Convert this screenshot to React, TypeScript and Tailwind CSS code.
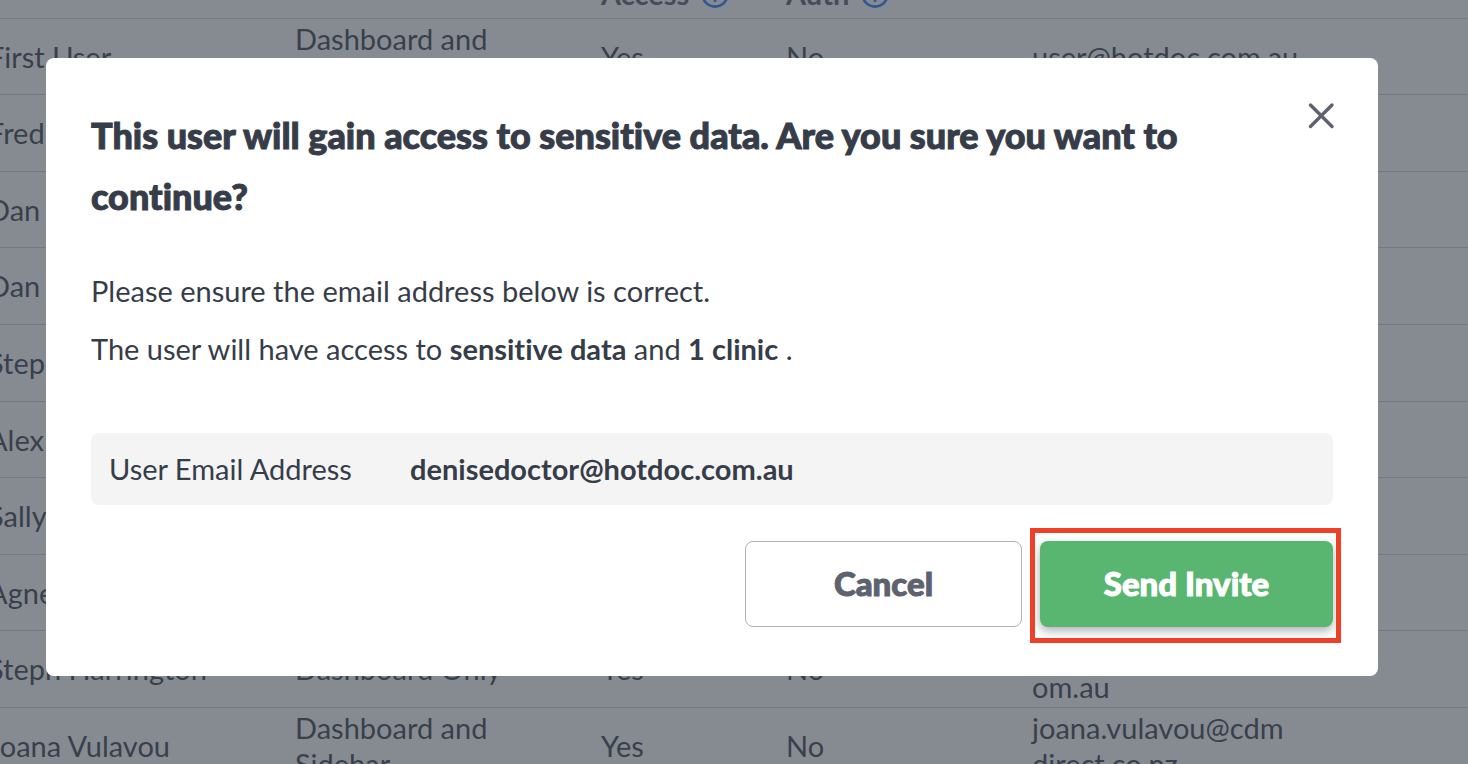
import React from "react";

type User = {
  name: string;
  permissions: string[];
  access: string;
  auth: string;
  email: string[];
};

const both = ["Dashboard and", "Sidebar"];
const only = ["Dashboard Only"];

const users: User[] = [
  { name: "First User", permissions: both, access: "Yes", auth: "No", email: ["user@hotdoc.com.au"] },
  { name: "Fred", permissions: [], access: "", auth: "", email: [] },
  { name: "Dan", permissions: [], access: "", auth: "", email: [] },
  { name: "Dan", permissions: [], access: "", auth: "", email: [] },
  { name: "Step", permissions: [], access: "", auth: "", email: [] },
  { name: "Alex", permissions: [], access: "", auth: "", email: [] },
  { name: "Sally", permissions: [], access: "", auth: "", email: [] },
  { name: "Agne", permissions: [], access: "", auth: "", email: [] },
  { name: "Steph Harrington", permissions: only, access: "Yes", auth: "No", email: ["\u00a0", "om.au"] },
  { name: "Joana Vulavou", permissions: both, access: "Yes", auth: "No", email: ["joana.vulavou@cdm", "direct.co.nz"] },
];

function InfoIcon() {
  return (
    <svg className="size-7 text-[#2678ff]" viewBox="0 0 28 28" fill="none" stroke="currentColor" strokeWidth="2.6" aria-hidden="true">
      <circle cx="14" cy="14" r="12.6" />
      <path d="M14 12.5V22M14 7v2.6" />
    </svg>
  );
}

function Lines({ lines }: { lines: string[] }) {
  return (
    <>
      {lines.map((line) => (
        <span key={line} className="block">
          {line}
        </span>
      ))}
    </>
  );
}

function UsersTable() {
  return (
    <table className="-mt-[58px] -ml-3 w-[calc(100%+12px)] table-fixed border-separate border-spacing-0 text-left text-[29px] leading-9 text-[#40444f]">
      <colgroup>
        <col className="w-[307px]" />
        <col className="w-[306px]" />
        <col className="w-[185px]" />
        <col className="w-[246px]" />
        <col />
      </colgroup>
      <thead>
        <tr className="h-[77px] text-[#5c6371]">
          <td className="border-b border-[#cfd0d4] p-0" />
          <td className="border-b border-[#cfd0d4] p-0" />
          {["Access", "Auth"].map((label) => (
            <th key={label} scope="col" className="border-b border-[#cfd0d4] p-0 pb-1.5 align-bottom">
              <span className="flex items-center gap-3">
                {label}
                <InfoIcon />
              </span>
            </th>
          ))}
          <td className="border-b border-[#cfd0d4] p-0" />
        </tr>
      </thead>
      <tbody>
        {users.map((user, i) => (
          <tr key={i} className="h-[77px] odd:h-[76px] nth-[5]:h-[77px] nth-[6]:h-[76px] nth-[7]:h-[77px] nth-[8]:h-[76px] nth-[9]:h-[77px] [&>td]:border-b [&>td]:border-[#cfd0d4] [&>td]:p-0 [&>td]:whitespace-nowrap">
            <td>{user.name}</td>
            <td><Lines lines={user.permissions} /></td>
            <td>{user.access}</td>
            <td>{user.auth}</td>
            <td><Lines lines={user.email} /></td>
          </tr>
        ))}
      </tbody>
    </table>
  );
}

function ConfirmDialog() {
  return (
    <section
      role="dialog"
      aria-modal="true"
      aria-labelledby="dialog-title"
      className="mt-[58px] mr-[90px] ml-[46px] flex-1 self-start rounded-lg bg-white px-[45px] pt-[47px] pb-[49px] text-[#363d49]"
    >
      <header className="flex items-start justify-between">
        <h1 id="dialog-title" className="max-w-[1140px] text-[36px] leading-[61px] font-black [-webkit-text-stroke:1px_currentColor]">
          This user will gain access to sensitive data. Are you sure you want to continue?
        </h1>
        <button type="button" aria-label="Close" className="-mt-px shrink-0">
          <svg className="size-6 overflow-visible" viewBox="0 0 24 24" fill="none" stroke="#5d626e" strokeWidth="3.4" strokeLinecap="round">
            <path d="M1.5 1l21.5 21.5M23 1l-21.5 21.5" />
          </svg>
        </button>
      </header>

      <div className="mt-[35px] text-[29px] leading-[58px]">
        <p>Please ensure the email address below is correct.</p>
        <p>
          The user will have access to <strong>sensitive data</strong> and <strong>1 clinic</strong> .
        </p>
      </div>

      <dl className="mt-[55px] flex h-[72px] items-center rounded-lg bg-[#f4f4f4] px-[18px] text-[29px]">
        <dt className="w-[301px]">User Email Address</dt>
        <dd className="font-bold">denisedoctor@hotdoc.com.au</dd>
      </dl>

      <footer className="mt-9 flex justify-end gap-[18px] text-[33px] font-black [-webkit-text-stroke:1px_currentColor]">
        <button type="button" className="h-[86px] w-[277px] rounded-lg border border-[#b0b2b8] bg-white text-[#5d626e]">
          Cancel
        </button>
        <div className="relative">
          <button type="button" className="h-[86px] w-[293px] rounded-lg bg-[#58b671] text-white shadow-[0_4px_10px_rgba(54,61,73,0.4)] [-webkit-text-stroke:1px_white]">
            Send Invite
          </button>
          <span className="pointer-events-none absolute -top-[13px] -right-2 -bottom-4 -left-[10px] border-5 border-[#ee4027]" />
        </div>
      </footer>
    </section>
  );
}

export default function App() {
  return (
    <main className="relative h-screen overflow-hidden bg-white font-['Lato',sans-serif] [font-variant-ligatures:none]">
      <UsersTable />
      <div className="absolute inset-0 flex bg-[#363d49]/60">
        <ConfirmDialog />
      </div>
    </main>
  );
}
